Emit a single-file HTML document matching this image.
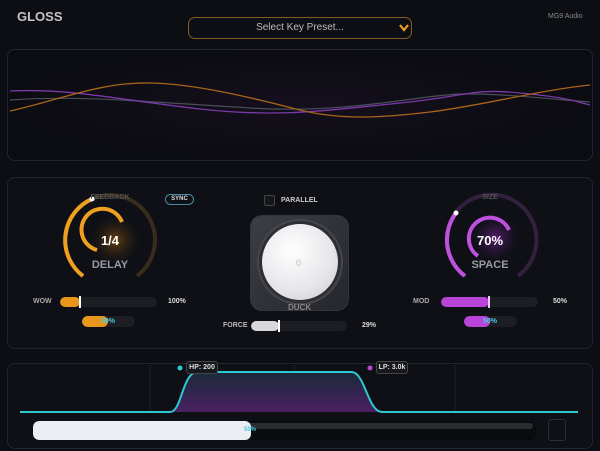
<!DOCTYPE html><html><head><style>
*{margin:0;padding:0;box-sizing:border-box}
body{width:600px;height:451px;background:#0c0e13;font-family:"Liberation Sans",sans-serif;position:relative;overflow:hidden;color:#ccc}
.a{position:absolute}
.panel{position:absolute;border:1px solid #22262e;border-radius:8px;background:#0e1016}
.lbl{position:absolute;font-size:7px;font-weight:bold;color:#aaa}
.track{position:absolute;background:#1c1e24;border-radius:6px;overflow:hidden}
.fill{position:absolute;left:0;top:0;bottom:0;border-radius:6px}
</style></head><body>
<div class="a" style="left:17px;top:9px;font-size:13px;font-weight:bold;color:#c4c4c4">GLOSS</div>
<div class="a" style="left:188px;top:17px;width:224px;height:22px;border:1px solid #8a5a22;border-radius:7px;background:#0d0f14;font-size:10px;color:#bbb;text-align:center;line-height:20px">Select Key Preset...</div>
<svg class="a" style="left:398px;top:23px" width="12" height="10"><path d="M2 2 L6 7 L10 2" stroke="#f0a020" stroke-width="2.2" fill="none"/></svg>
<div class="a" style="left:548px;top:13px;font-size:7px;color:#888">MG9 Audio</div>
<div class="panel" style="left:7px;top:49px;width:586px;height:112px;background:radial-gradient(ellipse at 50% 50%,#150f1d,#0b0c11 70%)"></div>
<svg class="a" style="left:0;top:0" width="600" height="170">
<path d="M10 100 C80 95,150 102,250 108 S420 95,460 94 S560 100,590 102" stroke="#4a4e5a" stroke-width="1.2" fill="none"/>
<path d="M10 91 C70 88,120 100,200 109 S330 110,400 103 S470 88,520 93 S570 100,590 105" stroke="#7a38a8" stroke-width="1.3" fill="none"/>
<path d="M10 111 C60 100,100 82,150 83 S260 100,300 110 S380 118,430 112 S540 90,590 85" stroke="#a8641a" stroke-width="1.3" fill="none"/>
</svg>
<div class="panel" style="left:7px;top:177px;width:586px;height:172px"></div>
<svg class="a" style="left:0;top:170px" width="600" height="180">
<defs><radialGradient id="go"><stop offset="0" stop-color="#6a4010"/><stop offset="1" stop-color="#0e1016" stop-opacity="0"/></radialGradient>
<radialGradient id="gp"><stop offset="0" stop-color="#5a1e70"/><stop offset="1" stop-color="#0e1016" stop-opacity="0"/></radialGradient></defs>
<circle cx="115" cy="70" r="28" fill="url(#go)"/>
<path d="M83 106 A45 45 0 1 1 137 106" stroke="#3a2c1c" stroke-width="4" fill="none"/>
<path d="M83 106 A45 45 0 0 1 92 29" stroke="#f0a020" stroke-width="4" fill="none"/>
<circle cx="92" cy="29" r="2.5" fill="#fff"/>
<path d="M97 80 A21 21 0 1 1 122 52" stroke="#f0a020" stroke-width="4" fill="none"/>
<text x="110" y="75" font-size="13" font-weight="bold" fill="#fff" text-anchor="middle" font-family="Liberation Sans">1/4</text>
<text x="110" y="98" font-size="11" font-weight="bold" fill="#9a9ca4" text-anchor="middle" font-family="Liberation Sans">DELAY</text>
<text x="110" y="29" font-size="7" font-weight="bold" fill="#555" text-anchor="middle" font-family="Liberation Sans">FEEDBACK</text>
<circle cx="495" cy="68" r="28" fill="url(#gp)"/>
<path d="M465 106 A45 45 0 1 1 518 106" stroke="#33203e" stroke-width="4" fill="none"/>
<path d="M465 106 A45 45 0 0 1 456 43" stroke="#c050e0" stroke-width="4" fill="none"/>
<circle cx="456" cy="43" r="2.5" fill="#fff"/>
<path d="M478 86 A21 21 0 1 1 509 60" stroke="#c050e0" stroke-width="4" fill="none"/>
<text x="490" y="75" font-size="13" font-weight="bold" fill="#fff" text-anchor="middle" font-family="Liberation Sans">70%</text>
<text x="490" y="98" font-size="11" font-weight="bold" fill="#9a9ca4" text-anchor="middle" font-family="Liberation Sans">SPACE</text>
<text x="490" y="29" font-size="7" font-weight="bold" fill="#555" text-anchor="middle" font-family="Liberation Sans">SIZE</text>
</svg>
<div class="a" style="left:165px;top:194px;width:29px;height:11px;border:1.5px solid #4a8aa8;border-radius:6px;font-size:6px;font-weight:bold;color:#ddd;text-align:center;line-height:8px">SYNC</div>
<div class="lbl" style="left:33px;top:298px">WOW</div>
<div class="track" style="left:60px;top:297px;width:97px;height:10px"><div class="fill" style="width:20px;background:#e8961c"></div></div>
<div class="a" style="left:79px;top:296px;width:2px;height:12px;background:#fff"></div>
<div class="lbl" style="left:168px;top:298px;color:#ddd">100%</div>
<div class="track" style="left:82px;top:316px;width:53px;height:11px"><div class="fill" style="width:26px;background:#e8961c"></div></div>
<div class="lbl" style="left:101px;top:318px;color:#4cd">50%</div>
<div class="a" style="left:264px;top:195px;width:11px;height:11px;border:1px solid #444;border-radius:2px;background:#15171c"></div>
<div class="lbl" style="left:281px;top:197px;color:#ccc">PARALLEL</div>
<div class="a" style="left:250px;top:215px;width:99px;height:96px;border-radius:12px;background:linear-gradient(135deg,#3c3e44,#25272c);border:1px solid #33353a"></div>
<div class="a" style="left:257px;top:219px;width:86px;height:86px;border-radius:50%;background:#2d2f34;border:2px solid #45474c"></div>
<div class="a" style="left:262px;top:224px;width:76px;height:76px;border-radius:50%;background:radial-gradient(circle at 40% 35%,#fff,#e6e6ea 60%,#c8c8cc)"></div>
<div class="a" style="left:296px;top:258px;font-size:9px;color:#bbb">0</div>
<div class="lbl" style="left:288px;top:303px;font-size:8px;color:#888">DUCK</div>
<div class="lbl" style="left:223px;top:322px;color:#bbb">FORCE</div>
<div class="track" style="left:251px;top:321px;width:96px;height:10px"><div class="fill" style="width:28px;background:#d8d8dc"></div></div>
<div class="a" style="left:278px;top:320px;width:2px;height:12px;background:#fff"></div>
<div class="lbl" style="left:362px;top:322px;color:#ddd">29%</div>
<div class="lbl" style="left:413px;top:298px">MOD</div>
<div class="track" style="left:441px;top:297px;width:97px;height:10px"><div class="fill" style="width:48px;background:#b844d8"></div></div>
<div class="a" style="left:488px;top:296px;width:2px;height:12px;background:#f0c8ff"></div>
<div class="lbl" style="left:553px;top:298px;color:#ddd">50%</div>
<div class="track" style="left:464px;top:316px;width:53px;height:11px"><div class="fill" style="width:26px;background:#b844d8"></div></div>
<div class="lbl" style="left:483px;top:318px;color:#4cd">50%</div>
<div class="panel" style="left:7px;top:363px;width:586px;height:86px"></div>
<svg class="a" style="left:0;top:360px" width="600" height="60">
<defs><linearGradient id="ff" x1="0" y1="0" x2="0" y2="1"><stop offset="0" stop-color="#1a2a3a"/><stop offset="1" stop-color="#4a2060"/></linearGradient></defs>
<g stroke="#1c1f26" stroke-width="1"><line x1="150" y1="5" x2="150" y2="52"/><line x1="294" y1="5" x2="294" y2="52"/><line x1="455" y1="5" x2="455" y2="52"/></g>
<path d="M170 52 C182 52,182 13,197 12 L352 12 C365 13,368 52,382 52 Z" fill="url(#ff)"/>
<path d="M20 52 L170 52 C182 52,182 13,197 12 L352 12 C365 13,368 52,382 52 L578 52" stroke="#2ec8d0" stroke-width="2" fill="none"/>
<circle cx="180" cy="8" r="2.5" fill="#2ec8d0"/><circle cx="370" cy="8" r="2.5" fill="#b844d8"/>
</svg>
<div class="a" style="left:186px;top:361px;width:32px;height:13px;border:1px solid #444;border-radius:3px;background:#16181d;font-size:7px;font-weight:bold;color:#ddd;text-align:center;line-height:11px">HP: 200</div>
<div class="a" style="left:376px;top:361px;width:32px;height:13px;border:1px solid #444;border-radius:3px;background:#16181d;font-size:7px;font-weight:bold;color:#ddd;text-align:center;line-height:11px">LP: 3.0k</div>
<div class="track" style="left:33px;top:421px;width:503px;height:19px;background:#0a0b0f"><div class="a" style="left:0;right:3px;top:2px;height:6px;background:#2a2c31;border-radius:3px"></div><div class="fill" style="width:218px;background:#eceef4"></div></div>
<div class="lbl" style="left:244px;top:427px;color:#4cd;font-size:6px">50%</div>
<div class="a" style="left:548px;top:419px;width:18px;height:22px;border:1px solid #2a2d34;border-radius:3px"></div>
</body></html>
